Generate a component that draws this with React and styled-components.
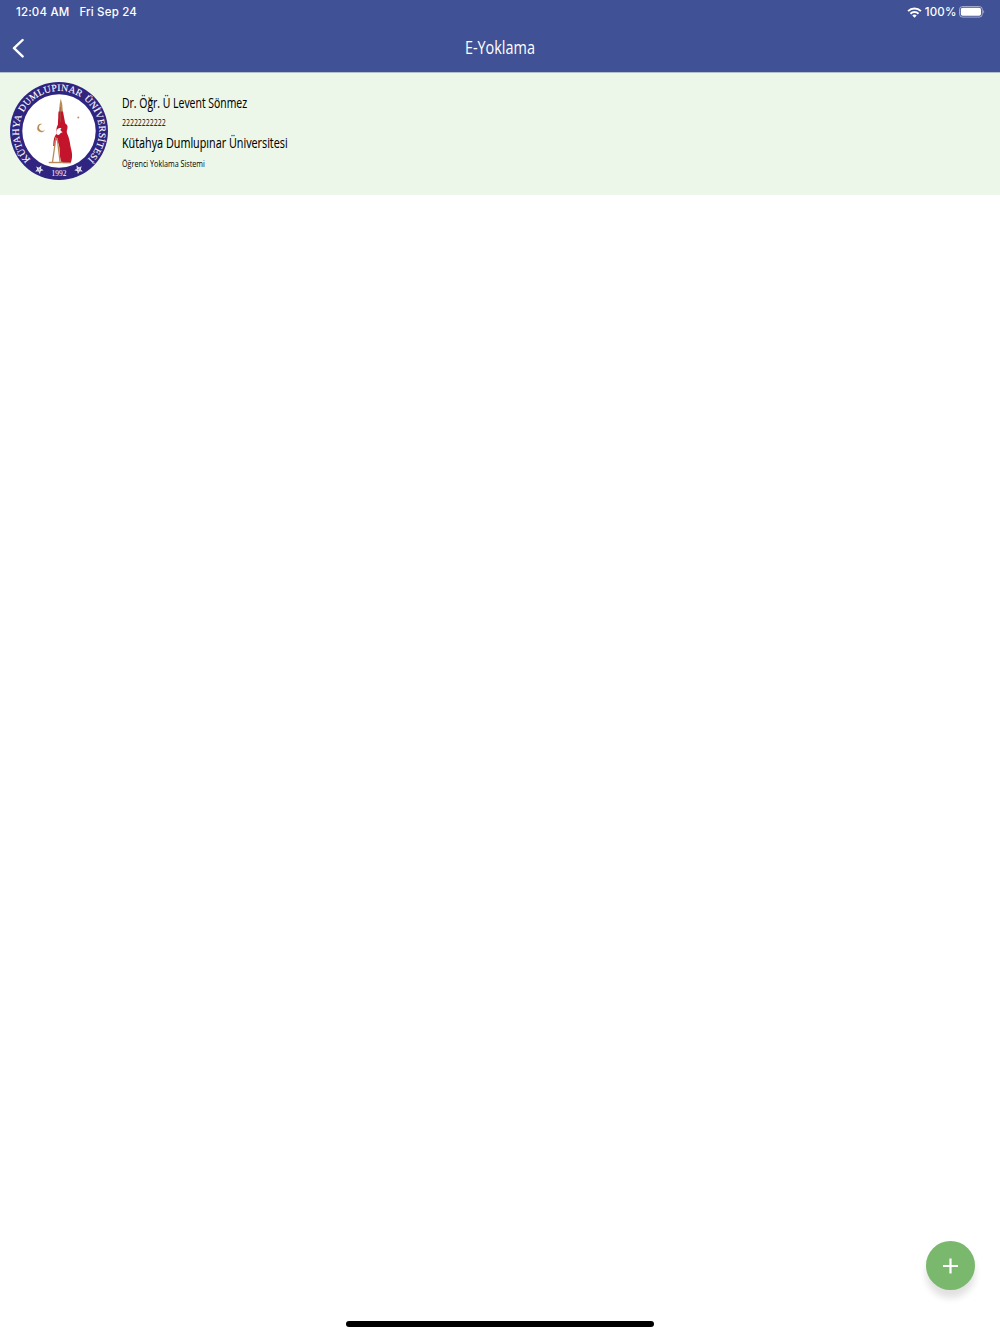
import React from 'react'
import styled, { createGlobalStyle } from 'styled-components';

const GlobalStyle = createGlobalStyle`
    * {
        box-sizing: border-box;
    }
    body {
        margin: 0;
        background-color: #fff;
    }
`;

const Screen = styled.div`
    position: relative;
    display: flex;
    flex-direction: column;
    width: 100%;
    height: 100vh;
    overflow: hidden;
    font-family: 'Open Sans', 'Noto Sans', sans-serif;
`;

const Header = styled.header`
    height: 73px;
    flex: none;
    background-color: #415195;
    border-bottom: 1px solid #b4bfca;
    color: #fff;
`;

const StatusBar = styled.div`
    display: flex;
    align-items: center;
    justify-content: space-between;
    height: 24px;
    padding: 0 15px 0 16px;
    font-family: Inter, sans-serif;
    font-size: 11.5px;
    font-weight: 500;
    line-height: 24px;
    letter-spacing: 0.17px;
`;

const StatusGroup = styled.div`
    display: flex;
    align-items: center;
    gap: ${props => props.$gap};
    white-space: nowrap;
`;

const NavBar = styled.div`
    display: grid;
    grid-template-columns: 60px 1fr 60px;
    align-items: center;
    height: 48px;
`;

const BackBtn = styled.button`
    display: flex;
    width: 36px;
    height: 48px;
    padding: 0 0 0 11px;
    align-items: center;
    border: 0;
    background: none;
    color: #fff;
`;

const Title = styled.h1`
    display: flex;
    justify-content: center;
    margin: 0 1px 2px 0;
    font-size: 18.5px;
    font-weight: 400;
    line-height: 46px;
`;

const Narrow = styled.span`
    display: inline-block;
    white-space: nowrap;
    transform: scaleX(${props => props.$scale});
    transform-origin: ${props => props.$origin || 'left'} center;
`;

const ProfileCard = styled.section`
    display: flex;
    flex: none;
    height: 122px;
    padding: 9px 10px;
    gap: 14px;
    background-color: #ecf7ea;
`;

const ProfileInfo = styled.div`
    display: flex;
    flex-direction: column;
    padding-top: 10px;
    color: #000;
`;

const NameLine = styled.div`
    height: 21px;
    font-size: 14.6px;
    line-height: ${props => props.$lineHeight};
    -webkit-text-stroke: 0.1px #000;
`;

const SubLine = styled.div`
    height: 20px;
    font-size: 9.4px;
    line-height: 19px;
`;

const AddBtn = styled.button`
    position: absolute;
    right: 25px;
    bottom: 44px;
    display: flex;
    align-items: center;
    justify-content: center;
    width: 49px;
    height: 49px;
    padding: 0;
    border: 0;
    border-radius: 50%;
    background-color: #7ab86d;
    box-shadow: 0 8px 7px rgba(0, 0, 0, 0.12);
`;

const HomeBar = styled.div`
    position: absolute;
    left: 50%;
    bottom: 7.5px;
    width: 308px;
    height: 5.5px;
    margin-left: -154px;
    border-radius: 3px;
    background-color: #000;
`;

const WifiIcon = () => (
    <svg width='15' height='11' viewBox='0 0 15 11' fill='none' stroke='#fff' strokeWidth='2'>
        <path d='M1.1 4.1a9 9 0 0 1 12.8 0' />
        <path d='M3.5 6.7a5.6 5.6 0 0 1 8 0' />
        <path d='M7.5 10.8 5.3 8.6a3.1 3.1 0 0 1 4.4 0z' fill='#fff' stroke='none' />
    </svg>
)

const BatteryIcon = () => (
    <svg width='26' height='12' viewBox='0 0 26 12'>
        <rect x='0.5' y='0.5' width='22.8' height='10.6' rx='3' fill='none' stroke='#fff' strokeOpacity='0.5' />
        <rect x='1.8' y='1.8' width='20.2' height='8' rx='1.8' fill='#fff' />
        <path d='M24.3 4.2c1.2.4 1.2 2.8 0 3.2z' fill='#fff' fillOpacity='0.6' />
    </svg>
)

const Star = ({ x, y, rotate }) => (
    <g transform={`translate(${x} ${y}) rotate(${rotate})`}>
        <path d='M0-4.4 1.2-1.4 4.2-1.3 1.9.7 2.7 3.7 0 2-2.7 3.7-1.9.7-4.2-1.3-1.2-1.4z' fill='#fff' />
        <path d='M0 0V-3M0 0 2.8-.9M0 0 1.7 2.4M0 0-1.7 2.4M0 0-2.8-.9' stroke='#2f2580' strokeWidth='0.25' />
    </g>
)

const UniversityLogo = () => (
    <svg width='98' height='98' viewBox='0 0 98 98'>
        <defs>
            <path id='ring' d='M20.6 77.4A40.1 40.1 0 1 1 77.4 77.4' />
        </defs>
        <circle cx='49' cy='49' r='49' fill='#2f2580' />
        <circle cx='49' cy='49' r='36.7' fill='#fff' />
        <text fill='#fff' stroke='#fff' strokeWidth='0.1' fontFamily='Liberation Serif, serif' fontSize='9.7' wordSpacing='1'>
            <textPath href='#ring' textLength='188.5' lengthAdjust='spacing'>KÜTAHYA DUMLUPINAR ÜNİVERSİTESİ</textPath>
        </text>
        <text x='49' y='94' textAnchor='middle' fill='#fff' fontFamily='Liberation Serif, serif' fontSize='7.4'>1992</text>
        <Star x={29.3} y={87.5} rotate={28} />
        <Star x={68.6} y={87.4} rotate={-28} />
        {/* crescent and star */}
        <path d='M31.8 41.9a4.1 4.1 0 1 0 3.1 6.2 3.6 3.6 0 1 1-3.1-6.2z' fill='#b98a58' stroke='#b98a58' strokeWidth='0.2' />
        <circle cx='68.3' cy='35.6' r='1' fill='#c79262' />
        {/* monument */}
        <path d='M50.7 16.5 49.7 22 48.7 33h4.4l-.9-11z' fill='#b98a58' />
        <path d='M48.5 29.5h4.5l2.4 13-.2 5-7.6 0z' fill='#c3142c' />
        <path d='M50.4 25v15' stroke='#a2573f' strokeWidth='0.7' />
        <path d='M46.6 46c.8-4 4-5.6 7.2-4.9 3 .7 4.3 2.7 3.6 5.4-.6 2.2-1 3.4-.1 5.4 1.7 3.6 2.2 6 2.9 10.5.4 3 1.3 5.5 1.7 8.5.5 3.4 0 6.3-1 9.6l-9.4-.2c-1.4-3-1.800-7.300-1.900-12.300-.1-4-.9-7.200-3.300-10-.5-3.800-.1-8 .3-12z' fill='#c3142c' />
        <path d='M46.3 49.5c.6-2.9 3-4.2 5.3-3.2-1.3.7-1.300 1.900-.6 2.800l1.700 1.200-2.100.8c-.9 2-2.800 2.300-4.400 1z' fill='#fff' />
        <path d='M43.4 80c.3-8 1-15.5 3.2-22 1.500 6 2.500 14 3.300 22z' fill='#fff' />
        <path d='M45.9 56 42.5 80M47.2 56l2.9 24' stroke='#b98a58' strokeWidth='1.3' />
        <path d='M43.8 64c0-4.6.7-8.200 2.400-10.800 2.600 1.400 4 5 4.400 10.500' fill='none' stroke='#c3142c' strokeWidth='1.2' />
        <path d='M38.8 80.5h14' stroke='#b98a58' strokeWidth='1.4' />
        <path d='M52.8 80.8h8' stroke='#a2573f' strokeWidth='1' />
    </svg>
)

const App = () => {
    return (
        <Screen>
            <GlobalStyle />
            <Header>
                <StatusBar>
                    <StatusGroup $gap='10px'>
                        <span>12:04 AM</span>
                        <span>Fri Sep 24</span>
                    </StatusGroup>
                    <StatusGroup $gap='2.5px'>
                        <WifiIcon />
                        <span>100%</span>
                        <BatteryIcon />
                    </StatusGroup>
                </StatusBar>
                <NavBar>
                    <BackBtn aria-label='back'>
                        <svg width='14' height='20' viewBox='0 0 14 20' fill='none' stroke='#fff' strokeWidth='2.4' strokeLinecap='round' strokeLinejoin='round'>
                            <path d='M11.6 2 3 10.2 11.6 18.4' />
                        </svg>
                    </BackBtn>
                    <Title><Narrow $scale={0.78} $origin='center'>E-Yoklama</Narrow></Title>
                </NavBar>
            </Header>
            <ProfileCard>
                <UniversityLogo />
                <ProfileInfo>
                    <NameLine $lineHeight='21px'><Narrow $scale={0.715}>Dr. Öğr. Ü Levent Sönmez</Narrow></NameLine>
                    <SubLine><Narrow $scale={0.74}>22222222222</Narrow></SubLine>
                    <NameLine $lineHeight='19px'><Narrow $scale={0.74}>Kütahya Dumlupınar Üniversitesi</Narrow></NameLine>
                    <SubLine><Narrow $scale={0.768}>Öğrenci Yoklama Sistemi</Narrow></SubLine>
                </ProfileInfo>
            </ProfileCard>
            <AddBtn aria-label='add'>
                <svg width='16' height='16' viewBox='0 0 16 16' stroke='#fff' strokeWidth='2.2'>
                    <path d='M7.5 .5v15M0 8h15' />
                </svg>
            </AddBtn>
            <HomeBar />
        </Screen>
    )
}

export default App
